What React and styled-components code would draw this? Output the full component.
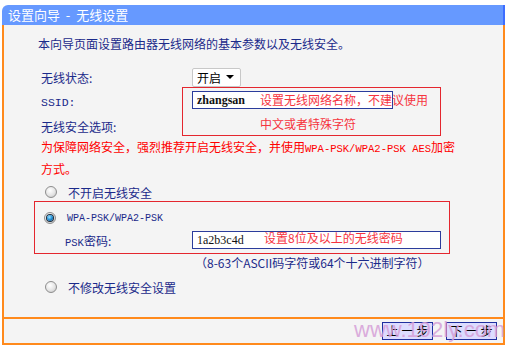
import styled, { createGlobalStyle } from 'styled-components';

const Global = createGlobalStyle`
    html, body {
        margin: 0;
        padding: 0;
        background: #fff;
    }
    body {
        font-family: "Noto Sans CJK SC", "Liberation Sans", sans-serif;
        font-size: 12px;
        color: #1b2a8a;
    }
`;

const Wrapper = styled.div`
    position: relative;
    margin: 5px 0 0 2px;
    width: 503px;
`;

const TitleBar = styled.div`
    height: 20px;
    box-sizing: border-box;
    background: #6699ff;
    border-top-left-radius: 6px;
    border-right: 2px solid #3d6dff;
    color: #fff;
    font-size: 13px;
    line-height: 20px;
    padding-left: 6px;
    white-space: pre;
`;

const Panel = styled.div`
    height: 320px;
    box-sizing: border-box;
    background: #f4f4f4;
    border: 2px solid #ff8a1c;
    border-top: none;
    display: flex;
    flex-direction: column;
`;

const Content = styled.div`
    flex: 1;
    padding: 9px 0 0 37px;
`;

const Intro = styled.div`
    height: 20px;
    line-height: 20px;
    margin-left: -3px;
`;

const Row = styled.div`
    display: flex;
    align-items: center;
    height: 20px;
    margin-top: ${p => p.$mt || 0}px;
    padding-left: ${p => p.$indent || 0}px;
    white-space: nowrap;
`;

const Label = styled.div`
    width: ${p => 151 - (p.$indent || 0)}px;
    flex-shrink: 0;
`;

const Mono = styled.span`
    font-family: "Liberation Mono", monospace;
    font-size: ${p => p.$size || 10}px;
`;

const Select = styled.div`
    width: 49px;
    height: 19px;
    box-sizing: border-box;
    background: #fff;
    border: 1px solid #c8c8c8;
    border-radius: 2px;
    color: #000;
    font-size: 12px;
    display: flex;
    align-items: center;
    justify-content: space-between;
    padding: 0 6px 0 4px;
`;

const Caret = styled.span`
    width: 0;
    height: 0;
    border-left: 4px solid transparent;
    border-right: 4px solid transparent;
    border-top: 4px solid #000;
`;

const Input = styled.div`
    width: ${p => p.$w}px;
    height: 18px;
    box-sizing: border-box;
    background: #fff;
    border: 1px solid #2b3c9c;
    color: #111;
    font-family: "Liberation Serif", serif;
    font-size: 12px;
    font-weight: ${p => (p.$bold ? 700 : 400)};
    line-height: 16px;
    padding-left: 4px;
`;

const Warning = styled.div`
    margin-top: 1px;
    color: #ff0000;
    line-height: 20px;
    white-space: nowrap;
`;

const Radio = styled.span`
    width: 12px;
    height: 12px;
    box-sizing: border-box;
    border-radius: 50%;
    border: 1px solid #8d8d8d;
    background: radial-gradient(circle at 40% 35%, #ffffff 0%, #e4e4e4 55%, #bdbdbd 100%);
    display: inline-flex;
    align-items: center;
    justify-content: center;
    margin: 0 11px 0 ${p => p.$ml || 4}px;
    flex-shrink: 0;

    &::after {
        content: '';
        display: ${p => (p.$checked ? 'block' : 'none')};
        width: 6px;
        height: 6px;
        border-radius: 50%;
        background: radial-gradient(circle at 40% 35%, #9fe2ff 0%, #1f8fd6 50%, #0b3a6b 100%);
        box-shadow: 0 0 0 1px #1d2b3a;
    }
`;

const Hint = styled.div`
    padding-left: 154px;
    height: 20px;
    line-height: 20px;
    margin-top: 3px;
    white-space: nowrap;
`;

const Footer = styled.div`
    height: 26px;
    box-sizing: border-box;
    border-top: 2px solid #ff8a1c;
    display: flex;
    align-items: center;
    justify-content: flex-end;
    gap: 13px;
    padding-right: 6px;
`;

const Button = styled.div`
    width: 51px;
    height: 18px;
    box-sizing: border-box;
    background: #dcdcff;
    border: 1px solid #1f2f9f;
    color: #000;
    font-size: 12px;
    line-height: 16px;
    text-align: center;
    letter-spacing: 3px;
    text-indent: 3px;
`;

const NoteBox = styled.div`
    position: absolute;
    left: ${p => p.$x}px;
    top: ${p => p.$y}px;
    width: ${p => p.$w}px;
    height: ${p => p.$h}px;
    box-sizing: border-box;
    border: 1px solid #e4262e;
    pointer-events: none;
`;

const NoteText = styled.div`
    position: absolute;
    left: ${p => p.$x}px;
    top: ${p => p.$y}px;
    color: #f6343f;
    font-size: 12px;
    line-height: 16px;
    white-space: nowrap;
`;

const Watermark = styled.div`
    position: absolute;
    left: 352px;
    top: 313px;
    color: #d6a0d8;
    opacity: 0.85;
    font-family: "Liberation Sans", sans-serif;
    font-size: 22px;
    line-height: 24px;
    white-space: nowrap;
    pointer-events: none;
`;

export default function App() {
    return (
        <>
            <Global />
            <Wrapper>
                <TitleBar>{'设置向导  -  无线设置'}</TitleBar>
                <Panel>
                    <Content>
                        <Intro>本向导页面设置路由器无线网络的基本参数以及无线安全。</Intro>
                        <Row $mt={13}>
                            <Label>无线状态:</Label>
                            <Select>开启<Caret /></Select>
                        </Row>
                        <Row $mt={3}>
                            <Label><Mono $size={11.5}>SSID:</Mono></Label>
                            <Input $w={201} $bold>zhangsan</Input>
                        </Row>
                        <Row $mt={6}>
                            <Label>无线安全选项:</Label>
                        </Row>
                        <Warning>
                            为保障网络安全，强烈推荐开启无线安全，并使用<Mono $size={10.5}>WPA-PSK/WPA2-PSK AES</Mono>加密
                            <br />
                            方式。
                        </Warning>
                        <Row $mt={3}>
                            <Radio />
                            不开启无线安全
                        </Row>
                        <Row $mt={6}>
                            <Radio $checked $ml={3} />
                            <Mono $size={10}>WPA-PSK/WPA2-PSK</Mono>
                        </Row>
                        <Row $mt={2} $indent={24}>
                            <Label $indent={24}><Mono $size={10.5}>PSK</Mono>密码:</Label>
                            <Input $w={249}>1a2b3c4d</Input>
                        </Row>
                        <Hint>（8-63个ASCII码字符或64个十六进制字符）</Hint>
                        <Row $mt={4}>
                            <Radio />
                            不修改无线安全设置
                        </Row>
                    </Content>
                    <Footer>
                        <Button>上一步</Button>
                        <Button>下一步</Button>
                    </Footer>
                </Panel>

                <NoteBox $x={180} $y={82} $w={259} $h={49} />
                <NoteText $x={258} $y={87}>设置无线网络名称，不建议使用</NoteText>
                <NoteText $x={258} $y={111}>中文或者特殊字符</NoteText>
                <NoteBox $x={32} $y={196} $w={416} $h={53} />
                <NoteText $x={262} $y={225}>设置8位及以上的无线密码</NoteText>
                <Watermark>www.192ly.com</Watermark>
            </Wrapper>
        </>
    );
}
